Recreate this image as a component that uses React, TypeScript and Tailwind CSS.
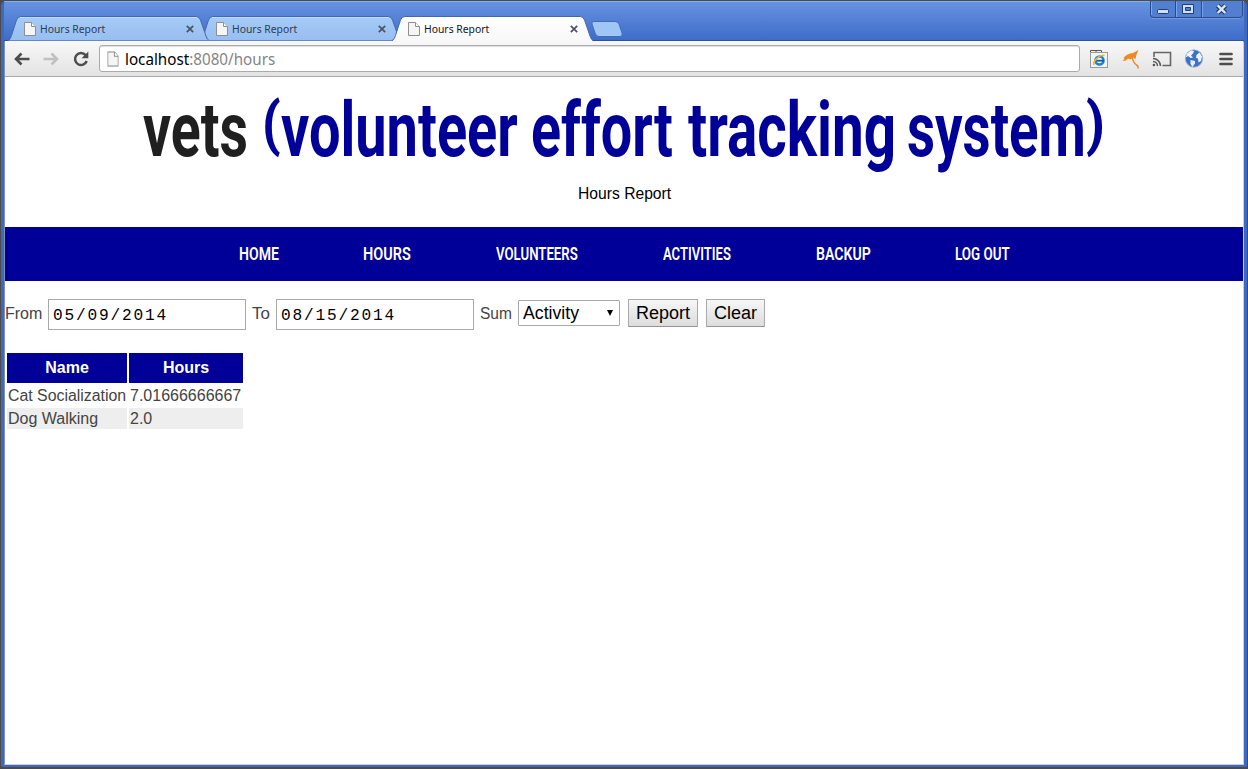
import { useLayoutEffect, useRef, useState, type ReactNode } from "react";

/** One line of text condensed or widened to take exactly `width` pixels. */
function Fit({ width, children, className = "" }: { width: number; children: ReactNode; className?: string }) {
  const ref = useRef<HTMLSpanElement>(null);
  const [scale, setScale] = useState(1);
  useLayoutEffect(() => {
    if (ref.current) setScale(width / ref.current.offsetWidth);
  }, [width]);
  return (
    <span className={`inline-block shrink-0 text-left whitespace-nowrap ${className}`} style={{ width }}>
      <span ref={ref} className="inline-block origin-left" style={{ transform: `scaleX(${scale})` }}>
        {children}
      </span>
    </span>
  );
}

function PageIcon({ className = "" }: { className?: string }) {
  return (
    <svg viewBox="0 0 12 14" className={`h-3.5 w-3 shrink-0 ${className}`}>
      <path d="M.5.5H7.5L11.5 4.5V13.5H.5Z" fill="#f5f5f5" stroke="#8e8e8e" />
      <path d="M7.5.5V4.5H11.5" fill="#fff" stroke="#8e8e8e" />
    </svg>
  );
}

function Tab({ active = false, className = "" }: { active?: boolean; className?: string }) {
  return (
    <div className={`relative h-[25px] w-[201px] shrink-0 ${className}`}>
      <svg viewBox="0 0 201 25" className="absolute inset-0 h-full w-full">
        <defs>
          <linearGradient id={active ? "tabOn" : "tabOff"} x1="0" y1="0" x2="0" y2="1">
            <stop offset="0" stopColor={active ? "#ffffff" : "#a5cbf7"} />
            <stop offset="1" stopColor={active ? "#f8f8f8" : "#98bdf0"} />
          </linearGradient>
        </defs>
        <path
          d="M0 25C2 24 2.500 22 3.500 19.500L8.500 4Q9.800.5 13 .5H188Q191.500.5 192.500 4L198 20Q199 23.500 201 25Z"
          fill={active ? "url(#tabOn)" : "url(#tabOff)"}
        />
        <path
          d="M0 24.500C2 24 2.500 22 3.500 19.500L8.500 4Q9.800.5 13 .5H188Q191.500.5 192.500 4L198 20Q199 23.500 201 24.500"
          fill="none"
          stroke="#4468a9"
          strokeWidth="1"
        />
        {!active && <path d="M12 1.500H189" stroke="#bddafc" />}
        {!active && <path d="M1 24.500H200" stroke="#6488c6" />}
      </svg>
      <div className="relative flex h-full items-center pl-4 font-['Noto_Sans'] text-[11px]">
        <PageIcon />
        <Fit width={65} className={active ? "mt-0.5 ml-1 text-[#161622]" : "mt-0.5 ml-1 text-[#303c55]"}>
          Hours Report
        </Fit>
        <svg viewBox="0 0 8 8" className="ml-[81px] size-2">
          <path d="M.8.8L7.200 7.200M7.200.8L.8 7.200" stroke="#4b5260" strokeWidth="1.700" />
        </svg>
      </div>
    </div>
  );
}

function WindowButtons() {
  return (
    <svg viewBox="0 0 96 19" className="absolute top-0 right-0 h-[19px] w-24">
      <path d="M2.500 0V14Q2.500 16.500 6 16.500H90Q94.500 16.500 94.500 14V0" fill="#5180d0" stroke="#29498c" />
      <path d="M3.500 1V14M28.500 1V16M54.500 1V16" stroke="#7fa6e8" />
      <path d="M27.500 0V16M53.500 0V16" stroke="#29498c" />
      <path d="M4 17.500H92" stroke="#7599dc" />
      <rect x="9.500" y="8.500" width="11" height="4" rx="1" fill="#cfdefa" stroke="#243c73" />
      <path d="M34.500 3.500H45.500V12.500H34.500Z" fill="#cfdefa" stroke="#243c73" />
      <path d="M37.500 6.500H42.500V9.500H37.500Z" fill="#5180d0" stroke="#243c73" />
      <path d="M69.500 4.500L77.500 12M77.500 4.500L69.500 12" stroke="#243c73" strokeWidth="4.600" />
      <path d="M69.700 4.300L77.300 12M77.300 4.300L69.700 12" stroke="#dce7fb" strokeWidth="2.400" />
    </svg>
  );
}

function Toolbar() {
  return (
    <div className="flex h-9 shrink-0 items-center border-b border-[#a9a9a9] bg-linear-to-b from-[#f8f8f8] to-[#e3e3e3]">
      <svg viewBox="0 0 16 14" className="ml-[9px] h-3.5 w-4">
        <path d="M15.500 7H3M7.500 1.500L2 7L7.500 12.500" fill="none" stroke="#4d4d4d" strokeWidth="2.600" />
      </svg>
      <svg viewBox="0 0 16 14" className="ml-[13px] h-3.5 w-4">
        <path d="M.5 7H13M8.500 1.500L14 7L8.500 12.500" fill="none" stroke="#c0c0c0" strokeWidth="2.600" />
      </svg>
      <svg viewBox="0 0 16 16" className="ml-3.5 size-4">
        <path d="M12.600 4.100A6 6 0 1 0 13.700 10" fill="none" stroke="#4d4d4d" strokeWidth="2.500" />
        <path d="M15.300.5V7.200H8.600Z" fill="#4d4d4d" />
      </svg>
      <div className="ml-2.5 flex h-[27px] w-[981px] items-center rounded-[3px] border border-[#ababab] bg-white pl-[7px] font-['Noto_Sans'] text-base leading-6 shadow-[inset_0_1px_1px_#dedede]">
        <PageIcon className="scale-x-95 scale-y-110" />
        <Fit width={150} className="ml-1.5 text-[#848484]">
          <span className="text-black">localhost</span>:8080/hours
        </Fit>
      </div>
      <svg viewBox="0 0 20 20" className="ml-[9px] size-5">
        <path d="M1.500 3V1.500H12.500V3M7 1V3" fill="none" stroke="#555" />
        <rect x="1.500" y="3.500" width="17" height="15" fill="#f3f3f3" stroke="#999" />
        <circle cx="10.500" cy="11.500" r="4" fill="none" stroke="#1e83d0" strokeWidth="2.600" />
        <path d="M7.500 11.700H15" stroke="#125aa5" strokeWidth="1.800" />
        <path d="M5 16C3.500 13 10 5 15.500 6.500" fill="none" stroke="#f1b52d" strokeWidth="1.600" />
      </svg>
      <svg viewBox="0 0 18 20" className="ml-[13px] h-5 w-[18px]">
        <path d="M.5 12L2.500 10L1.500 9Q5 4.500 11 4L16.500 1L14.500 5.500L13.500 10L11 8.500L8.500 10.500L6 9.500L4 11.500Z" fill="#ee8a20" />
        <path d="M10.500 8.500Q11 13.500 14.500 16Q16.500 17 16 19.500" fill="none" stroke="#ee8a20" strokeWidth="1.500" />
      </svg>
      <svg viewBox="0 0 20 16" className="ml-3 h-4 w-5">
        <path d="M2 6V1.500H18.500V14.500H10.500" fill="none" stroke="#666" strokeWidth="1.600" />
        <path d="M1 7.500A7.500 7.500 0 0 1 8.500 15M1 10.500A4.500 4.500 0 0 1 5.500 15" fill="none" stroke="#555" strokeWidth="1.500" />
        <circle cx="1.900" cy="14" r="1.300" fill="#555" />
      </svg>
      <svg viewBox="0 0 20 20" className="ml-3 size-5">
        <circle cx="10" cy="9.500" r="8.700" fill="#3f72c5" stroke="#9eb5db" strokeWidth=".8" />
        <path d="M3 4.500L7 1.500L10 2L9 4.500L7 6.500L9 8.500L6.500 9L4 7L1.800 8.500Z" fill="#eef4fb" />
        <path d="M6.500 11L11 12L11 14.500L8.500 18L6.500 15Z" fill="#e3ecf7" />
        <path d="M12.500 6L15.500 3.500L18 7.500L17 12L14.500 13.500L14 9.500L12 9Z" fill="#eef4fb" />
      </svg>
      <svg viewBox="0 0 14 14" className="ml-[15px] size-3.5">
        <path d="M1.500 2H12.500M1.500 7H12.500M1.500 12H12.500" stroke="#4d4d4d" strokeWidth="2.700" strokeLinecap="round" />
      </svg>
    </div>
  );
}

const links = [
  { text: "HOME", width: 40, className: "" },
  { text: "HOURS", width: 48, className: "ml-[84px]" },
  { text: "VOLUNTEERS", width: 82, className: "ml-[85px]" },
  { text: "ACTIVITIES", width: 68, className: "ml-[85px]" },
  { text: "BACKUP", width: 55, className: "ml-[85px]" },
  { text: "LOG OUT", width: 55, className: "ml-[84px]" },
];

const rows = [
  { name: "Cat Socialization", nameWidth: 118, hours: "7.01666666667", className: "" },
  { name: "Dog Walking", nameWidth: 90, hours: "2.0", className: "bg-[#eeeeee]" },
];

function DateField({ value }: { value: string }) {
  return (
    <div className="ml-1.5 flex h-[31px] w-[198px] items-center border border-[#a9a9a9] bg-white pt-0.5 pl-1 font-['Liberation_Mono'] text-base tracking-[1.8px] text-black">
      <Fit width={115}>{value}</Fit>
    </div>
  );
}

function Report() {
  return (
    <main className="min-h-0 flex-1 bg-white font-['Liberation_Sans'] text-base text-[#444]">
      <h1 className="flex h-[106px] pl-[138px] font-['Roboto'] text-[76px] leading-[106px] font-bold text-[#000099]">
        <Fit width={105} className="text-[#1f1f1f]">vets</Fit>
        <Fit width={19} className="-mt-1.5 ml-[14px] text-[59px] font-extrabold">(</Fit>
        <Fit width={237}>volunteer</Fit>
        <Fit width={142} className="ml-[13px]">effort</Fit>
        <Fit width={208} className="ml-[15px]">tracking</Fit>
        <Fit width={179} className="ml-[11px]">system</Fit>
        <Fit width={19} className="-mt-1.5 text-[59px] font-extrabold">)</Fit>
      </h1>
      <p className="flex h-5 pl-[573px] leading-[22px] text-black">
        <Fit width={93}>Hours Report</Fit>
      </p>
      <nav className="mt-6 flex h-[54px] bg-[#000099] pl-[234px] font-['Roboto'] text-[19px] leading-[54px] font-semibold text-white">
        {links.map((l) => (
          <Fit key={l.text} width={l.width} className={l.className}>
            {l.text}
          </Fit>
        ))}
      </nav>
      <form className="mt-[18px] flex items-start leading-[30px]">
        <Fit width={37}>From</Fit>
        <DateField value="05/09/2014" />
        <Fit width={18} className="ml-1.5">To</Fit>
        <DateField value="08/15/2014" />
        <Fit width={32} className="ml-1.5">Sum</Fit>
        <div className="mt-px ml-1.5 flex h-[26px] w-[102px] items-center rounded-[1px] border border-[#a9a9a9] bg-white pl-1 text-lg leading-6 text-black">
          <Fit width={56}>Activity</Fit>
          <svg viewBox="0 0 6 6" className="ml-7 size-1.5">
            <path d="M0 0H6L3 6Z" fill="#000" />
          </svg>
        </div>
        <button type="button" className="ml-2 flex h-7 w-[70px] items-center justify-center rounded-[1px] border border-[#a9a9a9] border-b-[#929292] bg-linear-to-b from-[#f6f6f6] to-[#dddddd] text-lg leading-6 text-black">
          <Fit width={54}>Report</Fit>
        </button>
        <button type="button" className="ml-2 flex h-7 w-[59px] items-center justify-center rounded-[1px] border border-[#a9a9a9] border-b-[#929292] bg-linear-to-b from-[#f6f6f6] to-[#dddddd] text-lg leading-6 text-black">
          <Fit width={43}>Clear</Fit>
        </button>
      </form>
      <div className="mt-[23px] ml-0.5 grid w-[236px] grid-cols-[120px_114px] gap-0.5">
        <div className="h-[30px] bg-[#000099] text-center leading-[29px] font-bold text-white">Name</div>
        <div className="h-[30px] bg-[#000099] text-center leading-[29px] font-bold text-white">Hours</div>
        {rows.map((r) => (
          <div key={r.name} className="col-span-2 grid grid-cols-subgrid leading-[21px]">
            <div className={`flex h-[21px] pl-px ${r.className}`}>
              <Fit width={r.nameWidth}>{r.name}</Fit>
            </div>
            <div className={`h-[21px] pl-px ${r.className}`}>{r.hours}</div>
          </div>
        ))}
      </div>
    </main>
  );
}

export default function App() {
  return (
    <div className="h-[769px] w-[1248px] overflow-hidden bg-[#4b4b4b] pt-px pr-px pb-0.5 pl-px">
      <div className="relative flex h-[766px] flex-col rounded-t-[5px] rounded-b-[2px] border-x-[3px] border-b-2 border-[#3f69bd] bg-linear-to-b from-[#6794e1] from-0% to-[#3e6bc7] to-[40px]">
        <div className="flex h-10 shrink-0 items-end border-t border-[#85acec] pl-1 shadow-[inset_0_-1px_#2f529b]">
          <Tab className="z-10" />
          <Tab className="-ml-[9px]" />
          <Tab active className="z-20 -ml-[9px]" />
          <svg viewBox="0 0 32 16" className="mb-1 -ml-0.5 h-4 w-8">
            <path d="M3 .5H24Q27 .5 28 3L31 12Q32 15.500 29 15.500H8Q5 15.500 4 12L1 3Q0 .5 3 .5Z" fill="#a0c6f6" stroke="#416cb9" />
          </svg>
        </div>
        <WindowButtons />
        <div className="flex min-h-0 flex-1 flex-col rounded-t-[2px] border border-t-0 border-[#c9d0da] border-l-[#7f91af] border-r-[#c9d0da] bg-white">
          <Toolbar />
          <Report />
        </div>
      </div>
    </div>
  );
}
